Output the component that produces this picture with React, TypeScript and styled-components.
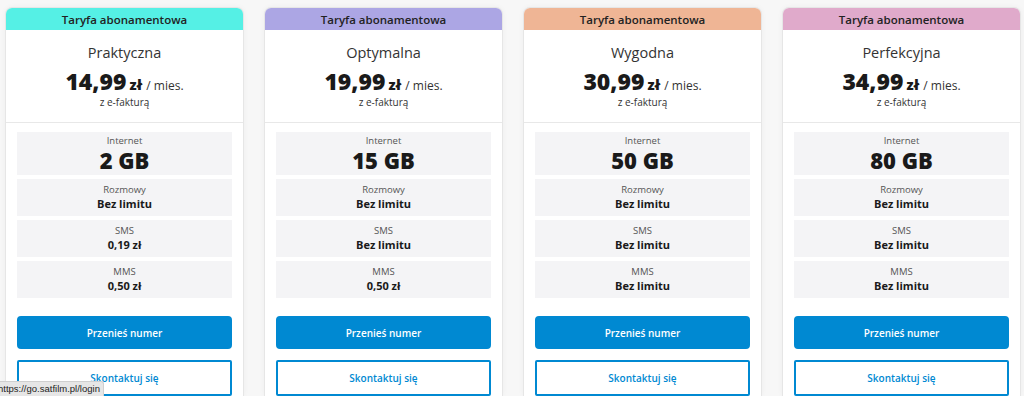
import React from "react";
import styled, { createGlobalStyle } from "styled-components";

const GlobalStyle = createGlobalStyle`
  html, body {
    margin: 0;
    padding: 0;
    background: #f7f7f7;
    font-family: "Open Sans", "Noto Sans", sans-serif;
    color: #222;
  }
`;

const Page = styled.div`
  display: grid;
  grid-template-columns: repeat(4, 237px);
  column-gap: 22px;
  padding: 8px 0 0 6px;
  height: 396px;
  box-sizing: border-box;
  overflow: hidden;
`;

const Card = styled.div`
  background: #fff;
  border-radius: 6px 6px 0 0;
  box-shadow: 0 0 0 1px #e6e6e6, 0 0 6px rgba(0, 0, 0, 0.06);
  display: flex;
  flex-direction: column;
`;

const Header = styled.div<{ color: string }>`
  background: ${props => props.color};
  height: 22px;
  border-radius: 6px 6px 0 0;
  display: flex;
  align-items: center;
  justify-content: center;
  font-size: 11.5px;
  font-weight: 600;
  color: #222;
`;

const Top = styled.div`
  display: flex;
  flex-direction: column;
  align-items: center;
  padding: 13px 0 13px;
  border-bottom: 1px solid #e8e8e8;
`;

const Name = styled.div`
  font-size: 14.5px;
  line-height: 20px;
  color: #333;
`;

const Price = styled.div`
  margin-top: 8px;
  display: flex;
  align-items: baseline;
  line-height: 21px;
`;

const Amount = styled.span`
  font-size: 23px;
  font-weight: 800;
  color: #1a1a1a;
`;

const Currency = styled.span`
  font-size: 14px;
  line-height: 14px;
  font-weight: 800;
  margin-left: 3px;
  color: #1a1a1a;
`;

const Period = styled.span`
  font-size: 12px;
  line-height: 12px;
  margin-left: 4px;
  color: #333;
`;

const Invoice = styled.div`
  margin-top: 3px;
  font-size: 10px;
  line-height: 14px;
  color: #333;
`;

const Features = styled.div`
  display: flex;
  flex-direction: column;
  gap: 4px;
  padding: 9px 11px 0;
`;

const Feature = styled.div<{ big?: boolean }>`
  background: #f4f4f6;
  display: flex;
  flex-direction: column;
  align-items: center;
  justify-content: center;
  height: ${props => (props.big ? 43 : 37)}px;
`;

const Label = styled.div`
  font-size: 9.5px;
  line-height: 13px;
  color: #555;
`;

const Value = styled.div<{ big?: boolean }>`
  font-size: ${props => (props.big ? 22 : 11)}px;
  line-height: ${props => (props.big ? 26 : 16)}px;
  font-weight: ${props => (props.big ? 800 : 700)};
  color: #1a1a1a;
`;

const Actions = styled.div`
  display: flex;
  flex-direction: column;
  gap: 11px;
  padding: 18px 11px 0;
`;

const Button = styled.button<{ outline?: boolean }>`
  height: ${props => (props.outline ? 36 : 33)}px;
  border-radius: ${props => (props.outline ? "2px" : "4px")};
  border: 2px solid #0089d2;
  background: ${props => (props.outline ? "#fff" : "#0089d2")};
  color: ${props => (props.outline ? "#0089d2" : "#fff")};
  font-family: inherit;
  font-size: 10px;
  font-weight: 600;
  cursor: pointer;
`;

const StatusBar = styled.div`
  position: fixed;
  left: 0;
  bottom: 0;
  height: 14px;
  padding: 0 3px 0 0;
  margin-left: -2px;
  background: #e6e6e6;
  border: 1px solid #cfcfcf;
  border-left: none;
  border-bottom: none;
  border-radius: 0 3px 0 0;
  font-family: "Liberation Sans", Arial, sans-serif;
  font-size: 9.5px;
  line-height: 14px;
  color: #222;
`;

type Plan = {
  color: string;
  name: string;
  price: string;
  internet: string;
  sms: string;
  mms: string;
};

const plans: Plan[] = [
  { color: "#55f0e5", name: "Praktyczna", price: "14,99", internet: "2 GB", sms: "0,19 zł", mms: "0,50 zł" },
  { color: "#aca6e4", name: "Optymalna", price: "19,99", internet: "15 GB", sms: "Bez limitu", mms: "0,50 zł" },
  { color: "#efb595", name: "Wygodna", price: "30,99", internet: "50 GB", sms: "Bez limitu", mms: "Bez limitu" },
  { color: "#e0aacb", name: "Perfekcyjna", price: "34,99", internet: "80 GB", sms: "Bez limitu", mms: "Bez limitu" },
];

export default function App() {
  return (
    <>
      <GlobalStyle />
      <Page>
        {plans.map(plan => (
          <Card key={plan.name}>
            <Header color={plan.color}>Taryfa abonamentowa</Header>
            <Top>
              <Name>{plan.name}</Name>
              <Price>
                <Amount>{plan.price}</Amount>
                <Currency>zł</Currency>
                <Period>/ mies.</Period>
              </Price>
              <Invoice>z e-fakturą</Invoice>
            </Top>
            <Features>
              <Feature big>
                <Label>Internet</Label>
                <Value big>{plan.internet}</Value>
              </Feature>
              <Feature>
                <Label>Rozmowy</Label>
                <Value>Bez limitu</Value>
              </Feature>
              <Feature>
                <Label>SMS</Label>
                <Value>{plan.sms}</Value>
              </Feature>
              <Feature>
                <Label>MMS</Label>
                <Value>{plan.mms}</Value>
              </Feature>
            </Features>
            <Actions>
              <Button>Przenieś numer</Button>
              <Button outline>Skontaktuj się</Button>
            </Actions>
          </Card>
        ))}
      </Page>
      <StatusBar>https://go.satfilm.pl/login</StatusBar>
    </>
  );
}
